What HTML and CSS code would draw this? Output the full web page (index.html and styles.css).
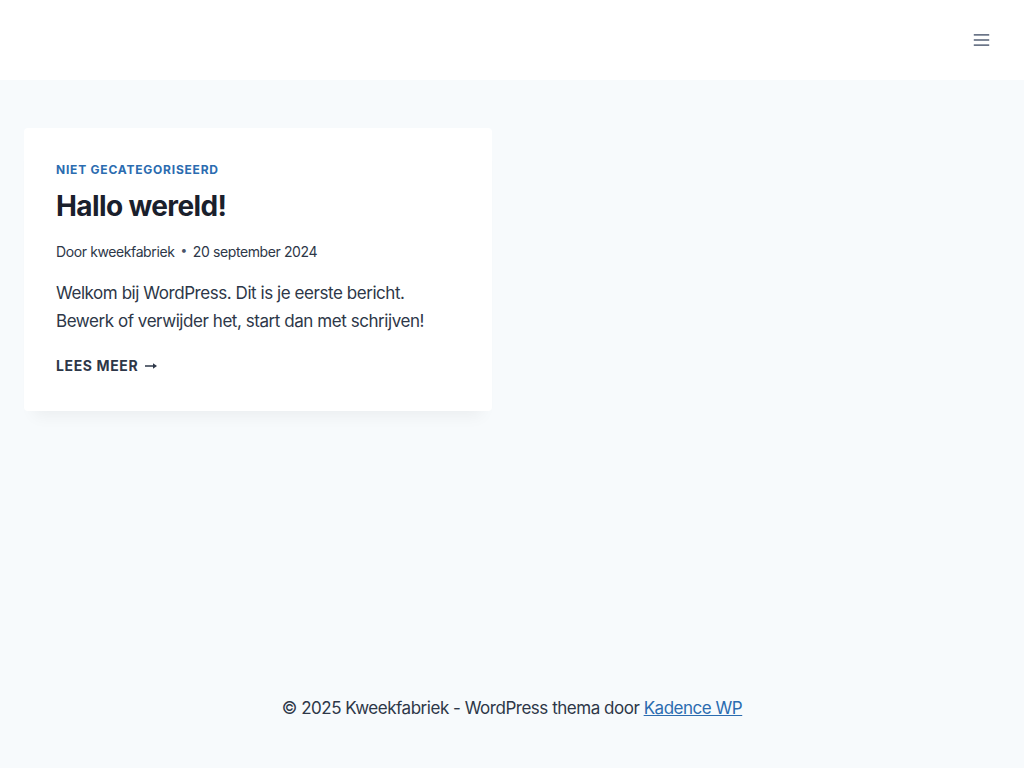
FILE: index.html
```html
<!DOCTYPE html>
<html lang="nl">
<head>
<meta charset="utf-8">
<title>Kweekfabriek</title>
<link rel="stylesheet" href="styles.css">
</head>
<body>
<div class="site">
  <header class="site-header">
    <button class="menu-toggle" aria-label="Menu">
      <svg width="18" height="14" viewBox="0 0 18 14" aria-hidden="true">
        <rect x="0" y="0" width="18" height="2"/>
        <rect x="0" y="6" width="18" height="2"/>
        <rect x="0" y="12" width="18" height="2"/>
      </svg>
    </button>
  </header>
  <main class="content-area">
    <div class="post-grid">
      <article class="entry">
        <div class="entry-taxonomies"><a href="#">Niet gecategoriseerd</a></div>
        <h2 class="entry-title">Hallo wereld!</h2>
        <div class="entry-meta">
          <span>Door <a href="#">kweekfabriek</a></span>
          <span class="dot">•</span>
          <span>20 september 2024</span>
        </div>
        <p class="entry-summary">Welkom bij WordPress. Dit is je eerste bericht. Bewerk of verwijder het, start dan met schrijven!</p>
        <a class="more-link" href="#">Lees meer <svg class="arrow" width="12" height="6" viewBox="0 0 12 6" aria-hidden="true"><path d="M0 2.25h8.5v1.5H0z"/><path d="M8 0.3L12 3 8 5.7z"/></svg></a>
      </article>
    </div>
  </main>
  <footer class="site-footer">
    <p>© 2025 Kweekfabriek - WordPress thema door <a href="#">Kadence WP</a></p>
  </footer>
</div>
</body>
</html>
```

FILE: styles.css
```css
* { box-sizing: border-box; }
html, body { margin: 0; padding: 0; }
body {
  background: #F7FAFC;
  color: #2D3748;
  font-family: Inter, "Liberation Sans", sans-serif;
  font-size: 17px;
  line-height: 1.6;
}
a { color: inherit; text-decoration: none; }
.site {
  min-height: 100vh;
  display: flex;
  flex-direction: column;
}
.site-header {
  height: 80px;
  background: #fff;
  display: flex;
  align-items: center;
  justify-content: flex-end;
  padding: 0 34px;
}
.menu-toggle {
  border: 0;
  background: none;
  padding: 0;
  display: flex;
  cursor: pointer;
}
.menu-toggle svg { fill: #6b7588; width: 17px; height: 12px; }
.content-area {
  flex: 1;
  padding: 48px 24px;
}
.post-grid {
  display: grid;
  grid-template-columns: 1fr 1fr;
  column-gap: 40px;
}
.entry {
  background: #fff;
  border-radius: 4px;
  box-shadow: 0 15px 15px -10px rgba(0,0,0,0.05);
  padding: 32px;
}
.entry-taxonomies {
  font-size: 12px;
  font-weight: 700;
  letter-spacing: 0.065em;
  text-transform: uppercase;
  line-height: 1.5;
  color: #2B6CB0;
  margin-top: 1px;
}
.entry-taxonomies a { color: #2B6CB0; }
.entry-title {
  margin: 6px 0 0;
  font-size: 28px;
  font-weight: 700;
  line-height: 1.5;
  letter-spacing: -0.022em;
  color: #1A202C;
}
.entry-meta {
  margin-top: 14px;
  font-size: 14px;
  line-height: 1.5;
  letter-spacing: -0.028em;
  color: #2D3748;
  display: flex;
}
.entry-meta .dot {
  margin: 0 6px;
  font-size: 12px;
  color: #4A5568;
}
.entry-summary {
  margin: 17px 0 0;
  font-size: 17px;
  line-height: 1.65;
  letter-spacing: -0.026em;
}
.more-link {
  display: inline-flex;
  align-items: center;
  margin-top: 20px;
  margin-bottom: 3px;
  font-size: 14px;
  font-weight: 700;
  letter-spacing: 0.045em;
  text-transform: uppercase;
  color: #2D3748;
  line-height: 1.5;
}
.more-link .arrow { margin-left: 7px; fill: #2D3748; }
.site-footer {
  padding: 20px 24px 46px;
  text-align: center;
}
.site-footer p { margin: 0; font-size: 17px; color: #2D3748; letter-spacing: -0.028em; }
.site-footer a { color: #2B6CB0; text-decoration: underline; }
```
